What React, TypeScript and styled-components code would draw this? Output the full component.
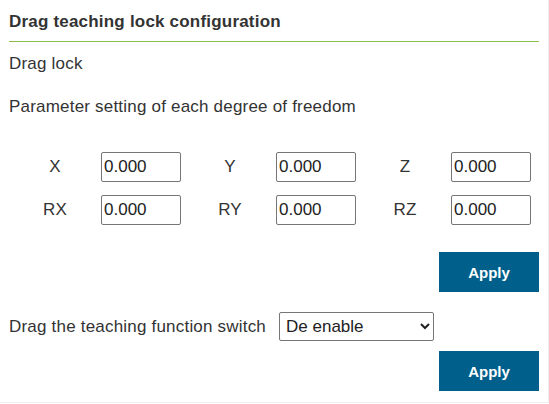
import React from "react";
import styled, { createGlobalStyle } from "styled-components";

const Global = createGlobalStyle`
  html, body { margin: 0; padding: 0; background: #ffffff; }
  body { font-family: "Liberation Sans", Arial, sans-serif; color: #333333; }
  * { box-sizing: border-box; }
`;

const Panel = styled.div`
  width: 549px;
  padding: 0 9px 11px 9px;
  border-right: 1px solid #efefef;
  border-bottom: 1px solid #efefef;
  background: #ffffff;
`;

const Title = styled.h2`
  margin: 0;
  padding: 12px 0 9px;
  font-size: 17px;
  font-weight: 700;
  letter-spacing: 0.2px;
  line-height: 20px;
  color: #333333;
  border-bottom: 1px solid #8dbd4a;
`;

const Text = styled.div<{ $top: number }>`
  margin-top: ${(p) => p.$top}px;
  font-size: 17px;
  letter-spacing: 0.2px;
  line-height: 20px;
  color: #333333;
`;

const AxisGrid = styled.div`
  margin-top: 35px;
  display: grid;
  grid-template-columns: repeat(3, 92px 83px);
  row-gap: 13px;
  align-items: center;
`;

const AxisLabel = styled.label`
  text-align: center;
  font-size: 17px;
  letter-spacing: 0.2px;
  line-height: 20px;
  color: #333333;
`;

const NumberInput = styled.input`
  width: 80px;
  height: 30px;
  padding: 0 2px;
  margin: 0;
  border: 1px solid #767676;
  border-radius: 2px;
  font-family: "Liberation Sans", Arial, sans-serif;
  font-size: 17px;
  color: #222222;
  background: #ffffff;
  outline: none;
`;

const ButtonRow = styled.div<{ $top: number }>`
  margin-top: ${(p) => p.$top}px;
  display: flex;
  justify-content: flex-end;
`;

const ApplyButton = styled.button`
  width: 100px;
  height: 40px;
  border: none;
  border-radius: 0;
  background: #005f8b;
  color: #ffffff;
  font-family: "Liberation Sans", Arial, sans-serif;
  font-size: 15px;
  font-weight: 700;
  cursor: pointer;
`;

const SwitchRow = styled.div`
  margin-top: 20px;
  display: flex;
  align-items: center;
  gap: 13px;
`;

const SwitchLabel = styled.label`
  font-size: 17px;
  letter-spacing: 0.2px;
  line-height: 20px;
  color: #333333;
`;

const Select = styled.select`
  width: 155px;
  height: 29px;
  padding: 0 2px;
  border: 1px solid #767676;
  border-radius: 2px;
  font-family: "Liberation Sans", Arial, sans-serif;
  font-size: 17px;
  color: #222222;
  background: #ffffff;
`;

const axes = [
  ["X", "Y", "Z"],
  ["RX", "RY", "RZ"],
];

export default function App() {
  return (
    <>
      <Global />
      <Panel>
        <Title>Drag teaching lock configuration</Title>
        <Text $top={12}>Drag lock</Text>
        <Text $top={23}>Parameter setting of each degree of freedom</Text>
        <AxisGrid>
          {axes.flat().map((a) => (
            <React.Fragment key={a}>
              <AxisLabel>{a}</AxisLabel>
              <NumberInput type="text" defaultValue="0.000" />
            </React.Fragment>
          ))}
        </AxisGrid>
        <ButtonRow $top={27}>
          <ApplyButton>Apply</ApplyButton>
        </ButtonRow>
        <SwitchRow>
          <SwitchLabel>Drag the teaching function switch</SwitchLabel>
          <Select defaultValue="0">
            <option value="0">De enable</option>
            <option value="1">Enable</option>
          </Select>
        </SwitchRow>
        <ButtonRow $top={10}>
          <ApplyButton>Apply</ApplyButton>
        </ButtonRow>
      </Panel>
    </>
  );
}
